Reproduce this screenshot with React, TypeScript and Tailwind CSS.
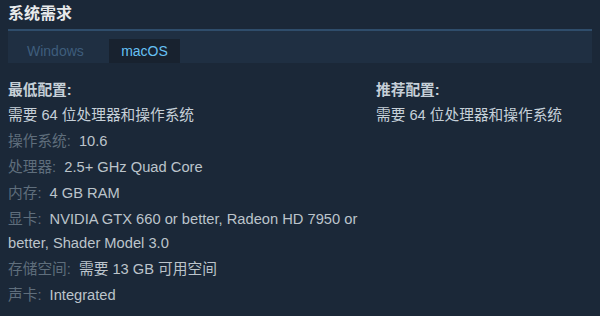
import React from "react";

const MIN_SPECS: [string, string][] = [
  ["操作系统", "10.6"],
  ["处理器", "2.5+ GHz Quad Core"],
  ["内存", "4 GB RAM"],
  ["显卡", "NVIDIA GTX 660 or better, Radeon HD 7950 or better, Shader Model 3.0"],
  ["存储空间", "需要 13 GB 可用空间"],
  ["声卡", "Integrated"],
];

export default function App() {
  return (
    <div
      className="h-[316px] w-[600px] overflow-hidden bg-[#1b2838] px-2 text-[14.7px] text-[#acb2b8]"
      style={{ fontFamily: '"Liberation Sans", Arial, "Noto Sans CJK SC", sans-serif' }}
    >
      <h2 className="pt-[4px] text-[16px] leading-[20px] font-bold text-[#e8eaec]">系统需求</h2>

      {/* tab strip */}
      <div className="mt-[5px] flex h-[34px] items-end border-t-2 border-[#2f4d6b] bg-[#1f2f42] pl-[10px] text-[14px]">
        <div className="flex h-[24px] w-[83px] items-center pl-[9px] text-[#3e5d7c]">Windows</div>
        <div className="ml-[8px] flex h-[24px] w-[71px] items-center justify-center bg-[#18222f] text-[#66c0f4]">
          macOS
        </div>
      </div>

      <div className="mt-[15px] flex">
        <div className="w-[368px] pr-[4px]">
          <div className="leading-[24px] font-bold text-[#c6d0d8]">最低配置:</div>
          <div className="mt-[1px] leading-[24px] text-[#c6d0d8]">需要 64 位处理器和操作系统</div>
          {MIN_SPECS.map(([label, value]) => (
            <div key={label} className="mt-[2px] leading-[24px] text-[#bcc4cb]">
              <span className="mr-[4px] text-[#5f6e7c]">{label}: </span>
              {value}
            </div>
          ))}
        </div>
        <div className="flex-1">
          <div className="leading-[24px] font-bold text-[#c6d0d8]">推荐配置:</div>
          <div className="mt-[1px] leading-[24px] text-[#c6d0d8]">需要 64 位处理器和操作系统</div>
        </div>
      </div>
    </div>
  );
}
